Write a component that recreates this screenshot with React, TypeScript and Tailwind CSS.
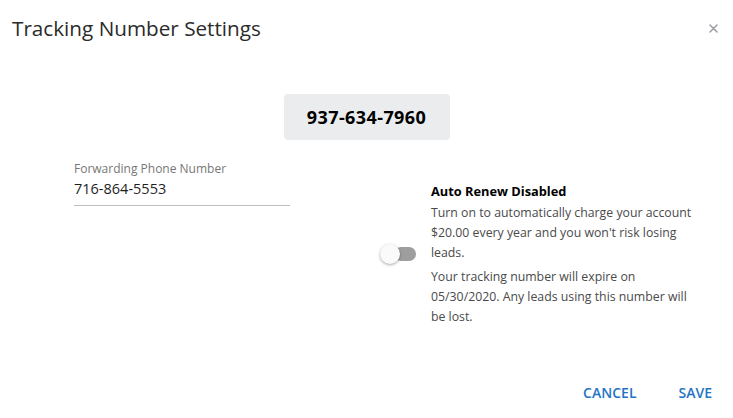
import React from "react";

export default function App() {
  const font = { fontFamily: "'Open Sans', Lato, sans-serif" };
  return (
    <div className="w-[733px] h-[418px] bg-white flex flex-col text-[#333]" style={font}>
      <div className="flex justify-between items-start pl-[12px] pr-[14px] pt-[15px]">
        <h1 className="text-[20.7px] leading-[26px] text-[#2b2b2b]">Tracking Number Settings</h1>
        <button className="mt-[7px] w-[12px] h-[12px] flex items-center justify-center">
          <svg width="9" height="9" viewBox="0 0 9 9">
            <path d="M1 1L8 8M8 1L1 8" stroke="#9a9da3" strokeWidth="1.5" strokeLinecap="round" />
          </svg>
        </button>
      </div>
      <div className="mx-auto mt-[53px] w-[166px] h-[46px] rounded-[4px] bg-[#ebecee] flex items-center justify-center">
        <span className="text-[18px] font-bold text-black tracking-[0.4px]">937-634-7960</span>
      </div>
      <div className="flex items-start mt-[21px] pl-[74px]">
        <div className="w-[216px]">
          <div className="text-[12px] leading-[16px] text-[#777]">Forwarding Phone Number</div>
          <div className="text-[14.5px] leading-[20px] mt-[2px] pb-[6px] text-[#1f1f1f] border-b border-[#bdbdbd]">716-864-5553</div>
        </div>
        <div className="flex items-center ml-[90px] mt-[20px]">
          <div className="relative w-[36px] h-[20px] shrink-0">
            <div className="absolute left-[14px] top-[3px] w-[22px] h-[14px] rounded-full bg-[#9e9e9e]" />
            <div className="absolute left-0 top-0 w-[20px] h-[20px] rounded-full bg-[#fafafa] shadow-[0_1px_3px_rgba(0,0,0,0.35)]" />
          </div>
          <div className="ml-[15px] w-[268px] text-[12.3px] leading-[20px] text-[#4a4a4a]">
            <div className="font-bold text-[12.8px] text-black">Auto Renew Disabled</div>
            <p className="mt-[2px]">Turn on to automatically charge your account $20.00 every year and you won't risk losing leads.</p>
            <p className="mt-[4px]">Your tracking number will expire on 05/30/2020. Any leads using this number will be lost.</p>
          </div>
        </div>
      </div>
      <div className="mt-auto mb-[15px] flex justify-end gap-[42px] pr-[21px]">
        <button className="text-[14px] font-semibold text-[#1f74c4]">CANCEL</button>
        <button className="text-[14px] font-semibold text-[#1f74c4]">SAVE</button>
      </div>
    </div>
  );
}
